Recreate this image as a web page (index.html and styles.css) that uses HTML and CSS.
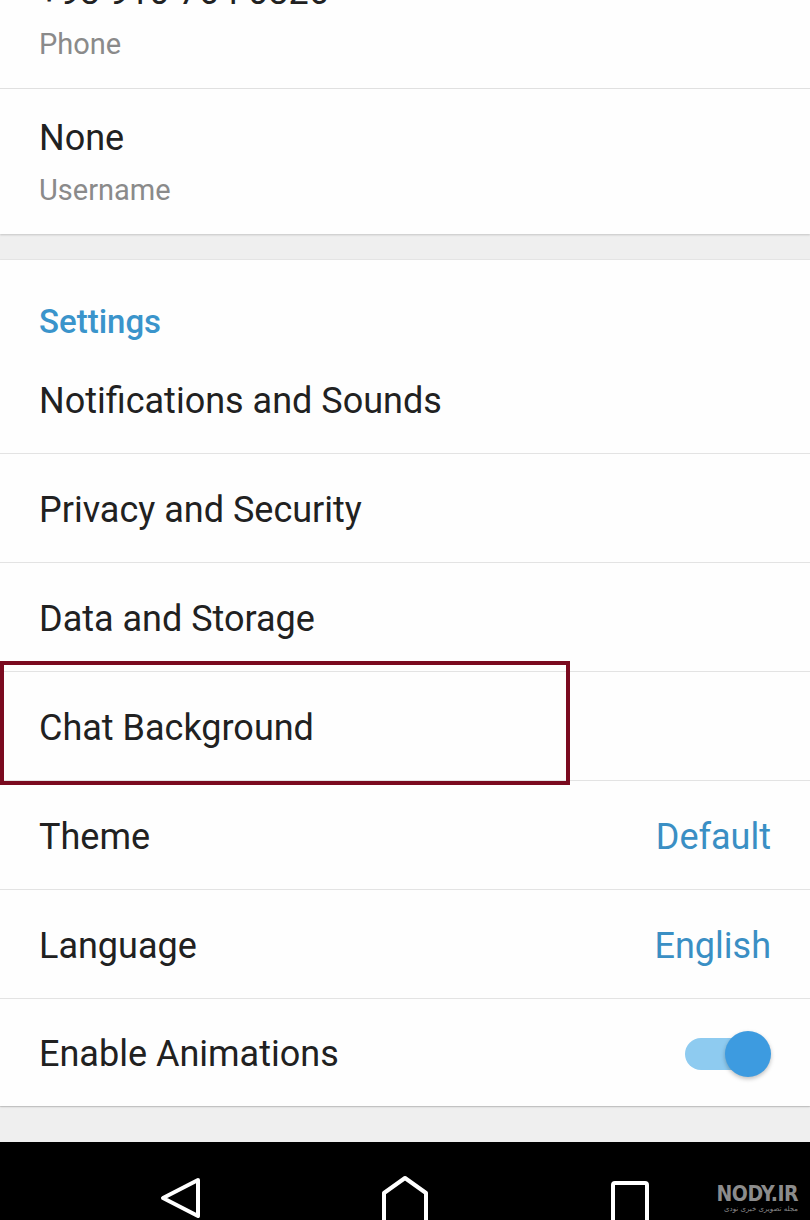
FILE: index.html
```html
<!DOCTYPE html>
<html lang="en">
<head>
<meta charset="utf-8">
<title>Settings</title>
<link rel="stylesheet" href="styles.css">
</head>
<body>
<div class="screen">
  <section class="card card-info">
    <div class="info-row info-row-first">
      <div class="value">+98 910 764 0826</div>
      <div class="label">Phone</div>
    </div>
    <div class="info-row">
      <div class="value">None</div>
      <div class="label">Username</div>
    </div>
  </section>
  <div class="gap"></div>
  <section class="card card-settings">
    <h2 class="section-title">Settings</h2>
    <div class="row"><span class="row-text">Notifications and Sounds</span></div>
    <div class="row"><span class="row-text">Privacy and Security</span></div>
    <div class="row"><span class="row-text">Data and Storage</span></div>
    <div class="row row-marked"><span class="row-text">Chat Background</span><span class="mark"></span></div>
    <div class="row"><span class="row-text">Theme</span><span class="row-value">Default</span></div>
    <div class="row"><span class="row-text">Language</span><span class="row-value">English</span></div>
    <div class="row row-last"><span class="row-text">Enable Animations</span>
      <span class="switch"><span class="switch-track"></span><span class="switch-thumb"></span></span>
    </div>
  </section>
  <div class="gap gap-bottom"></div>
  <nav class="navbar">
    <svg class="nav-icon nav-back" width="48" height="48" viewBox="0 0 48 48">
      <path d="M40 4 L5 22 L40 40 Z" fill="none" stroke="#fff" stroke-width="4" stroke-linejoin="round"/>
    </svg>
    <svg class="nav-icon nav-home" width="50" height="50" viewBox="0 0 50 50">
      <path d="M24 3 L45 18 L45 52 L3 52 L3 18 Z" fill="none" stroke="#fff" stroke-width="4" stroke-linejoin="round"/>
    </svg>
    <svg class="nav-icon nav-recent" width="44" height="44" viewBox="0 0 44 44">
      <rect x="3" y="3" width="34" height="40" rx="2" fill="none" stroke="#fff" stroke-width="4"/>
    </svg>
    <div class="watermark">
      <div class="wm-title">NODY.IR</div>
      <div class="wm-sub" dir="rtl" lang="fa">مجله تصویری خبری نودی</div>
    </div>
  </nav>
</div>
</body>
</html>
```
FILE: styles.css
```css
* { box-sizing: border-box; }
html, body {
  margin: 0;
  padding: 0;
  background: #efefef;
  overflow: hidden;
}
body {
  width: 810px;
  height: 1220px;
  font-family: Roboto, "Noto Sans", "Liberation Sans", sans-serif;
}
.screen {
  width: 810px;
  height: 1220px;
  display: flex;
  flex-direction: column;
  overflow: hidden;
}
.card {
  background: #fefefe;
}
.card-info {
  box-shadow: 0 1px 2px rgba(0,0,0,0.18);
  position: relative;
  z-index: 1;
}
.info-row {
  padding: 29px 39px 28px;
  border-bottom: 1px solid #e0e0e0;
}
.info-row:last-child { border-bottom: none; }
.info-row-first {
  margin-top: -57px;
}
.value {
  font-size: 36px;
  line-height: 40px;
  color: #212121;
  margin-bottom: 16px;
}
.label {
  font-size: 29px;
  line-height: 32px;
  color: #8a8a8a;
}
.gap {
  height: 26px;
  flex: none;
  border-bottom: 1px solid #e6e6e6;
}
.gap-bottom {
  height: 36px;
  border-bottom: none;
  border-top: 1px solid #d8d8d8;
}
.card-settings {
  box-shadow: 0 1px 2px rgba(0,0,0,0.15);
  position: relative;
  z-index: 1;
}
.section-title {
  margin: 0;
  padding: 42px 39px 3px;
  font-size: 33px;
  line-height: 40px;
  font-weight: 500;
  color: #3a94cb;
  height: 85px;
}
.row {
  position: relative;
  height: 109px;
  padding: 3px 39px 0;
  display: flex;
  align-items: center;
  justify-content: space-between;
  border-bottom: 1px solid #e3e3e3;
  font-size: 36px;
  color: #212121;
}
.row-text { line-height: 40px; }
.row-value {
  color: #3a8fc4;
  line-height: 40px;
}
.row-last {
  height: 107px;
  border-bottom: none;
}
.row-marked .mark {
  position: absolute;
  left: 0;
  top: -11px;
  width: 570px;
  height: 124px;
  border: 4px solid #7a0a1f;
}
.switch {
  position: relative;
  width: 86px;
  height: 46px;
  display: block;
}
.switch-track {
  position: absolute;
  left: 0;
  top: 7px;
  width: 80px;
  height: 32px;
  border-radius: 16px;
  background: #8ecbf0;
}
.switch-thumb {
  position: absolute;
  right: 0;
  top: 0;
  width: 46px;
  height: 46px;
  border-radius: 50%;
  background: #3d9be0;
  box-shadow: 0 2px 4px rgba(0,0,0,0.25);
}
.navbar {
  flex: none;
  height: 78px;
  background: #000;
  position: relative;
  display: flex;
  align-items: flex-start;
}
.nav-icon { position: absolute; display: block; }
.nav-back { left: 158px; top: 34px; }
.nav-home { left: 381px; top: 33px; }
.nav-recent { left: 610px; top: 38px; }
.watermark {
  position: absolute;
  left: 716px;
  top: 41px;
  width: 82px;
  text-align: right;
  color: #8c8c8c;
}
.wm-title {
  font-family: "DejaVu Sans Condensed", "DejaVu Sans", sans-serif;
  font-weight: bold;
  font-size: 21px;
  line-height: 22px;
  letter-spacing: -0.5px;
}
.wm-sub {
  font-family: "DejaVu Sans", "Noto Sans", sans-serif;
  font-size: 7px;
  line-height: 9px;
  text-align: right;
}
```
